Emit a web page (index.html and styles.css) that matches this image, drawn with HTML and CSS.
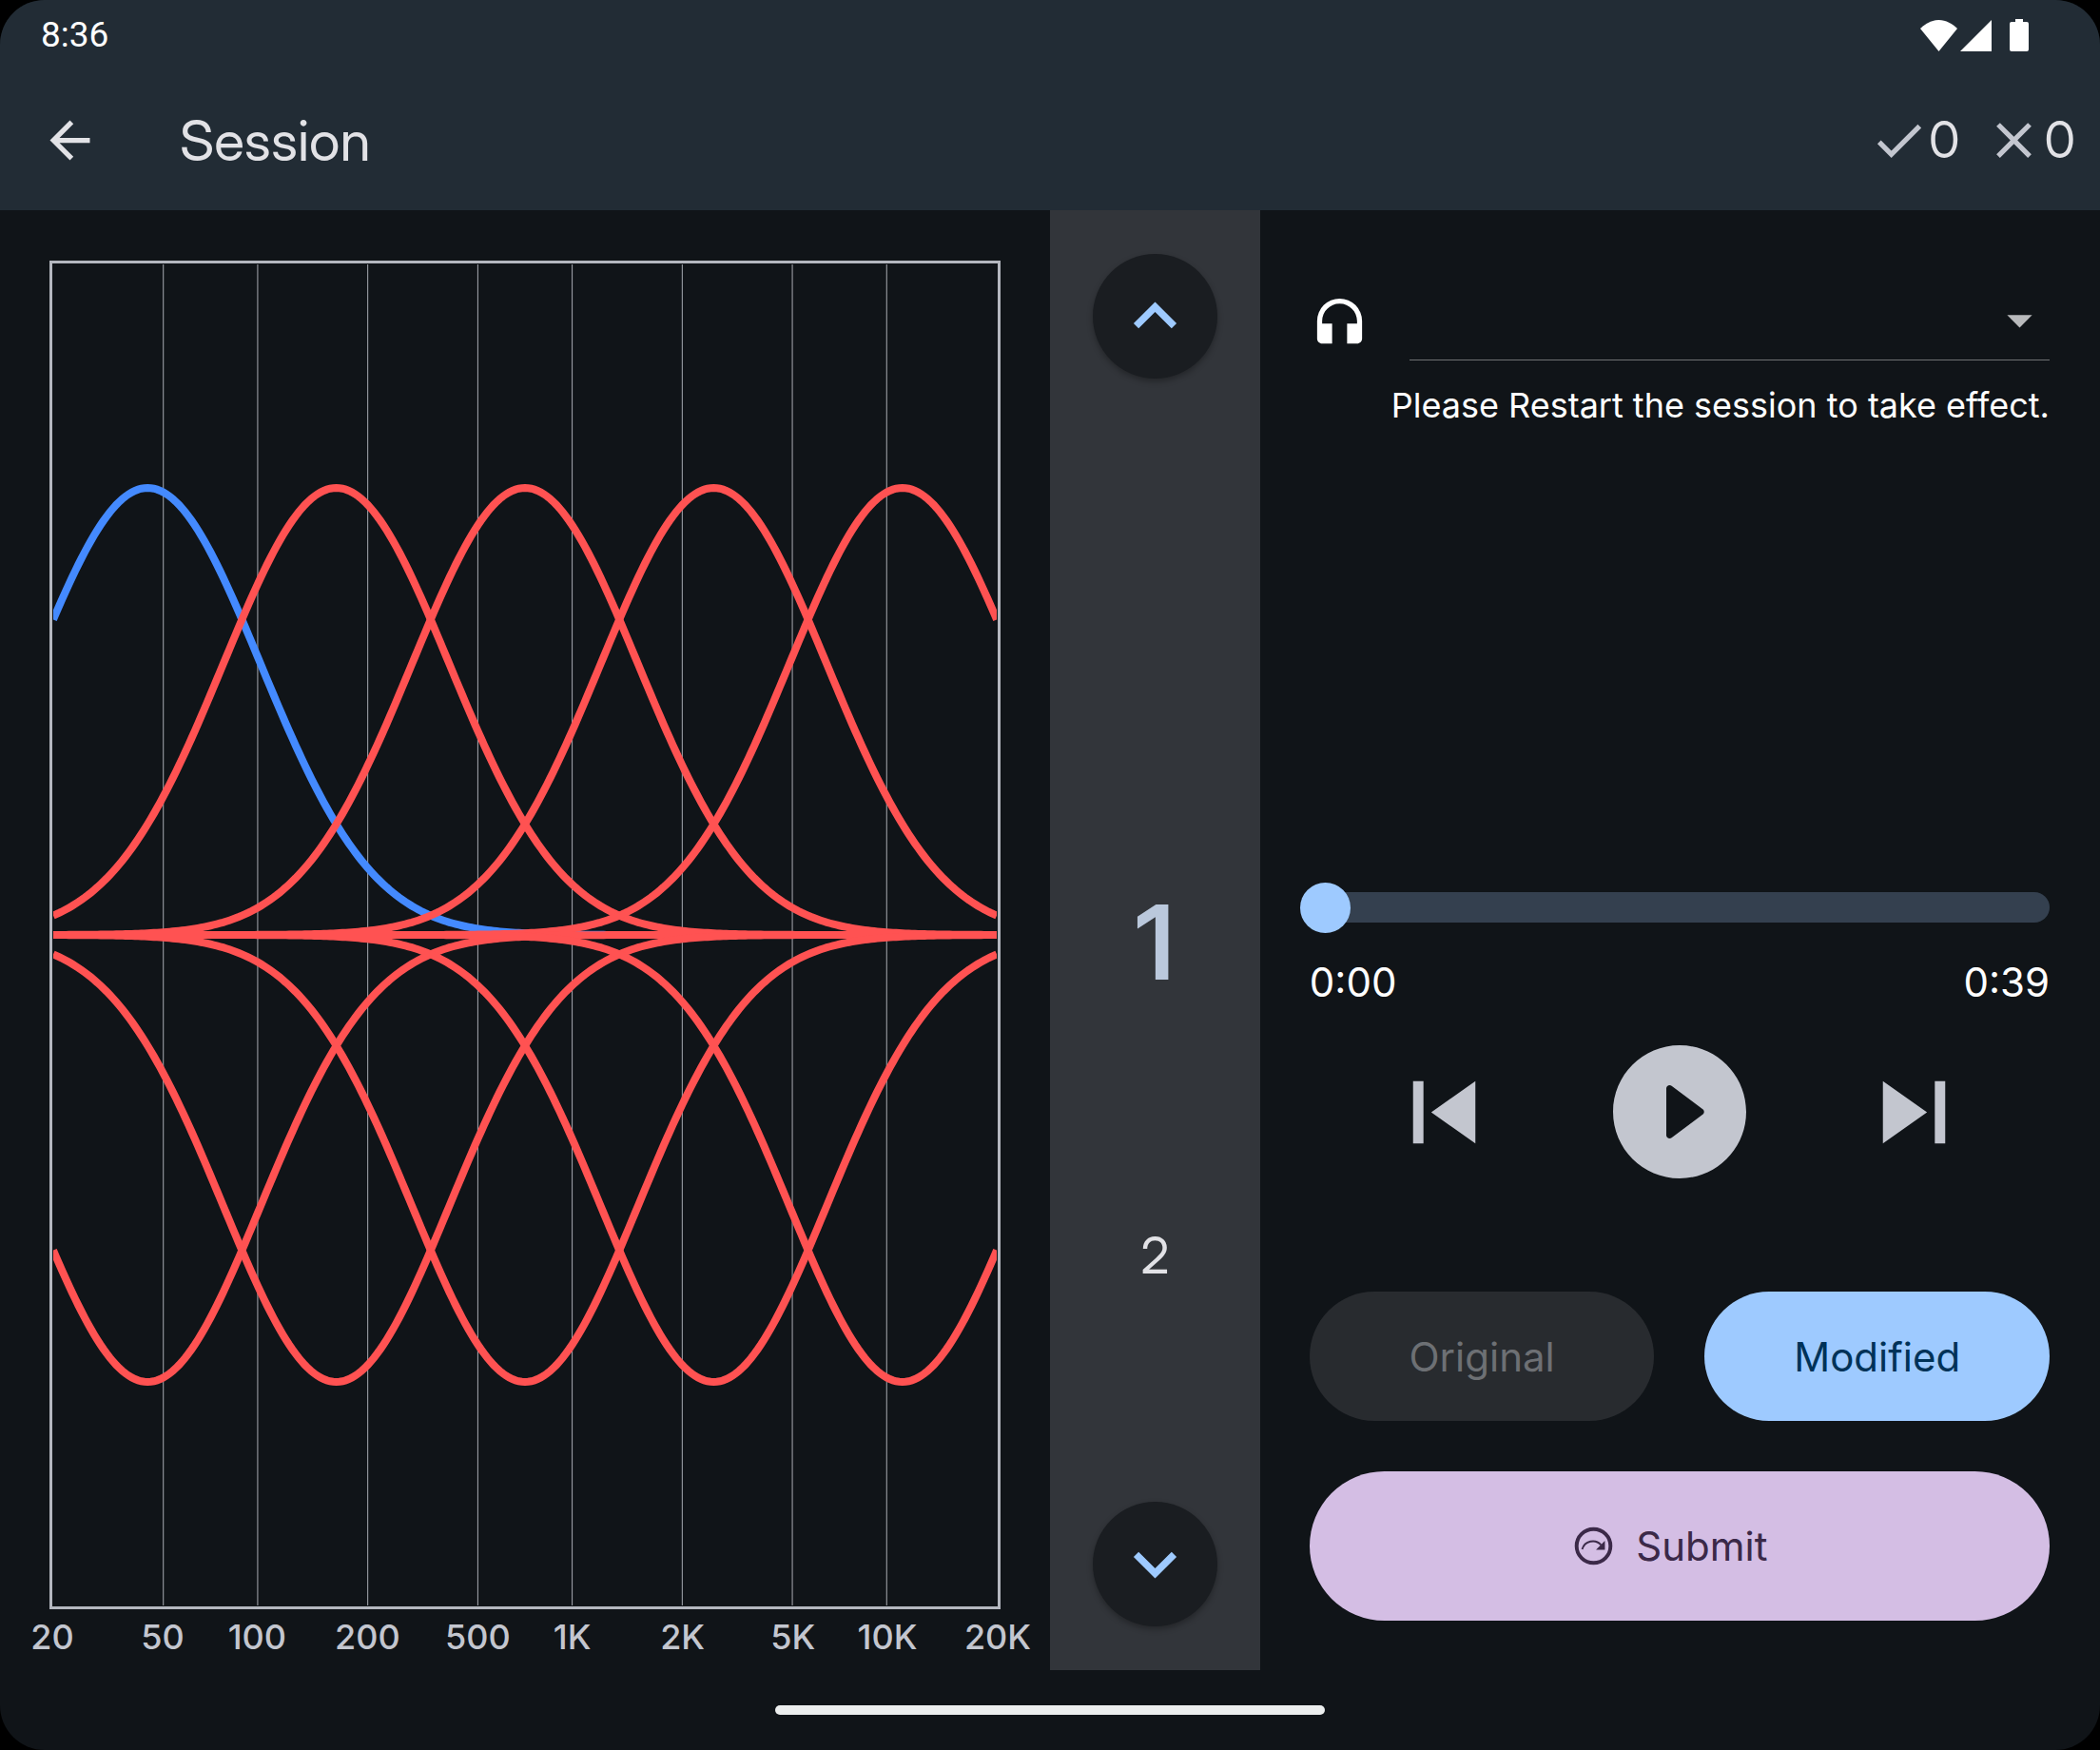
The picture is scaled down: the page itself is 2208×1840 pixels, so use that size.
FILE: index.html
```html
<!DOCTYPE html>
<html lang="en">
<head>
<meta charset="utf-8">
<meta name="viewport" content="width=device-width, initial-scale=1">
<title>Session</title>
<link rel="stylesheet" href="styles.css">
</head>
<body>
<div class="screen">
  <header class="app-header">
    <div class="status-bar">
      <time class="clock">8:36</time>
      <div class="status-icons">
        <svg class="wifi" viewBox="0 0 39 33" aria-hidden="true"><path d="M19.500 33L0 9C5 4 12 0 19.500 0S34 4 39 9z"/></svg>
        <svg class="signal" viewBox="0 0 33 33" aria-hidden="true"><path d="M33 0v33H0z"/></svg>
        <svg class="battery" viewBox="0 0 20 34" aria-hidden="true"><path d="M6 0h8v3h4a2 2 0 0 1 2 2v27a2 2 0 0 1-2 2H2a2 2 0 0 1-2-2V5a2 2 0 0 1 2-2h4z"/></svg>
      </div>
    </div>
    <div class="toolbar">
      <button class="back" type="button" aria-label="Back">
        <svg class="icon" viewBox="0 0 24 24" aria-hidden="true"><path d="M20 11H7.830l5.590-5.590L12 4l-8 8 8 8 1.410-1.410L7.830 13H20v-2z"/></svg>
      </button>
      <h1 class="title">Session</h1>
      <div class="score">
        <svg class="icon" viewBox="0 0 24 24" aria-label="Correct"><path d="M9 16.170L4.830 12l-1.420 1.410L9 19 21 7l-1.410-1.410z"/></svg>
        <span>0</span>
      </div>
      <div class="score">
        <svg class="icon" viewBox="0 0 24 24" aria-label="Wrong"><path d="M19 6.410L17.590 5 12 10.590 6.410 5 5 6.410 10.590 12 5 17.590 6.410 19 12 13.410 17.590 19 19 17.590 13.410 12z"/></svg>
        <span>0</span>
      </div>
    </div>
  </header>

  <main class="content">
    <section class="graph" aria-label="Frequency response">
      <div class="plot">
        <svg class="plot-canvas" id="plot" viewBox="0 0 600 600" preserveAspectRatio="none" aria-hidden="true">
          <path class="grid-lines" d="M70 0V600M130 0V600M200 0V600M270 0V600M330 0V600M400 0V600M470 0V600M530 0V600"/>
        </svg>
      </div>
      <div class="axis">
        <span>20</span><span>50</span><span>100</span><span>200</span><span>500</span><span>1K</span><span>2K</span><span>5K</span><span>10K</span><span>20K</span>
      </div>
    </section>

    <section class="picker" aria-label="Band">
      <button class="round" type="button" aria-label="Previous band">
        <svg class="icon" viewBox="0 0 24 24" aria-hidden="true"><path d="M12 6.300l-8.600 8.600 2 2L12 10.300l6.600 6.600 2-2z"/></svg>
      </button>
      <ol class="wheel">
        <li class="current">1</li>
        <li>2</li>
      </ol>
      <button class="round" type="button" aria-label="Next band">
        <svg class="icon" viewBox="0 0 24 24" aria-hidden="true"><path d="M12 17.700l8.600-8.600-2-2L12 13.700 5.400 7.100l-2 2z"/></svg>
      </button>
    </section>

    <section class="player" aria-label="Player">
      <div class="source">
        <label for="clip"><svg class="icon headphones" viewBox="0 0 24 24" aria-label="Audio clip"><path d="M12 3a9 9 0 0 0-9 9v7c0 1.100.9 2 2 2h4v-8H5v-1c0-3.870 3.130-7 7-7s7 3.130 7 7v1h-4v8h4c1.100 0 2-.9 2-2v-7a9 9 0 0 0-9-9z"/></svg></label>
        <div class="select-box">
          <select id="clip"><option></option></select>
          <svg class="icon caret" viewBox="0 0 24 24" aria-hidden="true"><path d="M7 10l5 5 5-5z"/></svg>
        </div>
      </div>
      <p class="notice">Please Restart the session to take effect.</p>

      <div class="transport">
        <input class="seek" type="range" min="0" max="39" value="0" aria-label="Position">
        <div class="times"><span>0:00</span><span>0:39</span></div>
        <div class="controls">
          <button type="button" aria-label="Previous"><svg class="skip" viewBox="0 0 24 24" aria-hidden="true"><path d="M6 6h2v12H6zm3.500 6l8.500 6V6z"/></svg></button>
          <button type="button" aria-label="Play"><svg class="play" viewBox="0 0 24 24" aria-hidden="true"><path d="M12 2C6.480 2 2 6.480 2 12s4.480 10 10 10 10-4.480 10-10S17.520 2 12 2zM10 15.500v-7c0-.41.47-.65.8-.4l4.670 3.500c.27.2.27.6 0 .8L10.800 15.900c-.33.250-.8.010-.8-.4z"/></svg></button>
          <button type="button" aria-label="Next"><svg class="skip" viewBox="0 0 24 24" aria-hidden="true"><path d="M6 18l8.500-6L6 6zM16 6v12h2V6z"/></svg></button>
        </div>
      </div>

      <div class="actions">
        <button class="pill" type="button" disabled>Original</button>
        <button class="pill modified" type="button">Modified</button>
        <button class="pill submit" type="button">
          <svg class="submit-icon" viewBox="0 0 24 24" aria-hidden="true"><circle cx="12" cy="12" r="9.100"/><path d="M5.900 13.800C7.200 9.200 13 8 16 11.400"/><path class="head" d="M18.100 9.200v4.800h-4.800z"/></svg>
          Submit
        </button>
      </div>
    </section>
  </main>

  <footer class="nav"><span class="nav-handle"></span></footer>
</div>
<script src="graph.js"></script>
</body>
</html>
```
FILE: styles.css
```css
* {
  box-sizing: border-box;
}

html {
  background: #000;
}

body {
  margin: 0;
  background: #000;
  color: #e2e2e6;
  font-family: Inter, "Liberation Sans", sans-serif;
}

button {
  margin: 0;
  padding: 0;
  border: 0;
  background: none;
  color: inherit;
  font: inherit;
}

svg {
  display: block;
  fill: currentColor;
}

.icon {
  width: 63px;
  height: 63px;
}

.screen {
  display: flex;
  flex-direction: column;
  min-height: 100vh;
  overflow: hidden;
  border-radius: 47px;
  background: #101418;
}

/* Header */
.app-header {
  background: #222c35;
}

.status-bar {
  display: flex;
  align-items: center;
  justify-content: space-between;
  height: 74px;
  padding: 0 75px 0 43px;
  color: #fff;
}

.clock {
  font: 37px/44px Roboto, sans-serif;
}

.status-icons {
  display: flex;
  align-items: center;
}

.wifi {
  width: 39px;
  height: 33px;
}

.signal {
  width: 33px;
  height: 33px;
  margin: 0 19px 0 3px;
}

.battery {
  width: 20px;
  height: 34px;
}

.toolbar {
  display: flex;
  align-items: center;
  gap: 26px;
  height: 147px;
  padding: 0 26px 0 42px;
}

/* Large text takes the display cut of Inter */
.title,
.score,
.wheel {
  font-family: "Inter Display", Inter, "Liberation Sans", sans-serif;
}

.title {
  flex: 1;
  margin: 0 0 0 58px;
  font-size: 59px;
  font-weight: 400;
  line-height: 74px;
}

.score {
  display: flex;
  align-items: center;
  font-size: 53px;
  line-height: 63px;
}

.score .icon {
  color: #c3c6cf;
}

/* Main columns */
.content {
  display: grid;
  grid-template-columns: 5fr 1fr 4fr;
  flex: 1;
}

.graph {
  display: flex;
  flex-direction: column;
  padding: 53px 52px 14px;
}

.plot {
  display: flex;
  flex: 1;
  padding: 1px;
  border: 3px solid #b4b7bf;
}

.plot-canvas {
  flex: 1;
  width: 100%;
  height: 100%;
  min-width: 0;
  fill: none;
}

.grid-lines {
  stroke: #a8abb2;
  stroke-width: 1px;
  vector-effect: non-scaling-stroke;
}

.curve {
  stroke: #ff5252;
  stroke-width: 8px;
  vector-effect: non-scaling-stroke;
}

.curve.selected {
  stroke: #448aff;
}

.axis {
  display: grid;
  grid-template-columns: 7fr 6fr 7fr 7fr 6fr 7fr 7fr 6fr 7fr 0;
  margin: 8px 3px 0;
  color: #c3c6cf;
  font-size: 36px;
  font-weight: 500;
  line-height: 42px;
}

.axis span {
  display: flex;
  justify-content: center;
  width: 0;
}

.picker {
  display: flex;
  flex-direction: column;
  align-items: center;
  padding: 46px 0;
  background: #32353a;
}

.round {
  display: grid;
  place-items: center;
  width: 131px;
  height: 131px;
  border-radius: 50%;
  background: #1a1d21;
  box-shadow: 0 3px 6px rgba(0, 0, 0, .3);
  color: #9ecaff;
}

.wheel {
  display: grid;
  grid-template-rows: repeat(3, 1fr);
  flex: 1;
  margin: 98px 0 94px;
  padding: 0;
  list-style: none;
  font-size: 53px;
  text-align: center;
}

.wheel li {
  grid-row: 3;
  align-self: center;
}

.wheel .current {
  grid-row: 2;
  color: #bac8dc;
  font-size: 108px;
  font-weight: 600;
}

/* Player */
.player {
  display: flex;
  flex-direction: column;
  padding: 53px 53px 52px 52px;
}

.source {
  display: flex;
  align-items: center;
  gap: 42px;
  padding-top: 21px;
}

.headphones {
  color: #fff;
}

.select-box {
  display: grid;
  flex: 1;
  align-items: center;
  justify-items: end;
  height: 84px;
  border-bottom: 1px solid #6f7173;
}

.select-box select,
.caret {
  grid-area: 1 / 1;
}

.select-box select {
  width: 100%;
  height: 63px;
  border: 0;
  appearance: none;
  background: none;
  color: #fff;
  font: inherit;
  font-size: 42px;
}

.caret {
  color: #b9babc;
  pointer-events: none;
}

.notice {
  margin: 21px 0 0;
  color: #fff;
  font-size: 36px;
  line-height: 53px;
  text-align: right;
}

.transport {
  margin-top: auto;
}

.seek {
  display: block;
  width: 100%;
  height: 53px;
  margin: 0;
  appearance: none;
  background: none;
}

.seek::-webkit-slider-runnable-track {
  height: 32px;
  border-radius: 16px;
  background: #34404f;
}

.seek::-webkit-slider-thumb {
  width: 53px;
  height: 53px;
  margin: -10px 0 0 -10px;
  appearance: none;
  border-radius: 50%;
  background: #9ecaff;
}

.times {
  display: flex;
  justify-content: space-between;
  margin-top: 21px;
  color: #fff;
  font-size: 42px;
  line-height: 63px;
}

.controls {
  display: flex;
  align-items: center;
  justify-content: space-evenly;
  color: #c3c6cf;
}

.controls button {
  padding: 21px;
}

.skip {
  width: 131px;
  height: 131px;
}

.play {
  width: 168px;
  height: 168px;
}

.actions {
  display: grid;
  grid-template-columns: 1fr 1fr;
  gap: 53px;
  margin-top: 84px;
}

.pill {
  height: 136px;
  border-radius: 80px;
  background: #282b2f;
  color: #6d7074;
  font-size: 42px;
}

.modified {
  background: #9ecaff;
  color: #003258;
}

.submit {
  display: flex;
  grid-column: 1 / -1;
  align-items: center;
  justify-content: center;
  gap: 21px;
  height: 157px;
  padding-right: 21px;
  background: #d4bee4;
  color: #3b2948;
}

.submit-icon {
  width: 47px;
  height: 47px;
  fill: none;
  stroke: currentColor;
  stroke-width: 2;
}

.submit-icon path {
  stroke-width: 1;
}

.submit-icon .head {
  fill: currentColor;
  stroke: none;
}

/* Gesture bar */
.nav {
  display: flex;
  align-items: center;
  justify-content: center;
  height: 84px;
}

.nav-handle {
  width: 578px;
  height: 10px;
  border-radius: 5px;
  background: #eceeee;
}
```
FILE: graph.js
```js
// Draws one bell curve per band, boosted above and cut below the centre line.
const plot = document.getElementById("plot");
const SIZE = 600;
const BANDS = 5;
const GAIN = 200;
const FALLOFF = 1.395;

function bandPath(band, direction) {
  const spacing = SIZE / BANDS;
  const center = spacing * (band + 0.5);
  const points = [];
  for (let x = 0; x <= SIZE; x += 2) {
    const distance = (x - center) / spacing;
    const y = SIZE / 2 - direction * GAIN * Math.exp(-FALLOFF * distance * distance);
    points.push(x + " " + y.toFixed(2));
  }
  return "M" + points.join("L");
}

function addCurve(band, direction, selected) {
  const path = document.createElementNS("http://www.w3.org/2000/svg", "path");
  path.setAttribute("class", selected ? "curve selected" : "curve");
  path.setAttribute("d", bandPath(band, direction));
  plot.appendChild(path);
}

for (const direction of [1, -1]) {
  for (let band = 0; band < BANDS; band += 1) {
    addCurve(band, direction, direction === 1 && band === 0);
  }
}
```
